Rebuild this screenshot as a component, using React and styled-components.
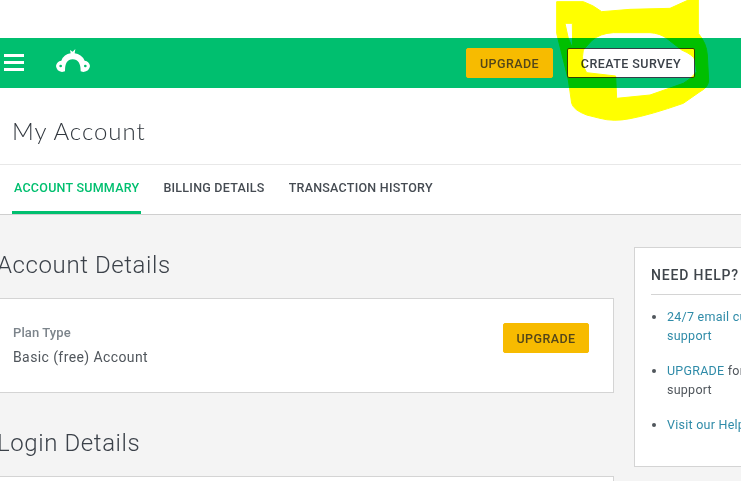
import React from "react";
import styled, { createGlobalStyle } from "styled-components";

const Global = createGlobalStyle`
  html, body { margin: 0; padding: 0; width: 741px; height: 481px; overflow: hidden; background: #fff; }
  body { font-family: "Roboto", "Liberation Sans", sans-serif; color: #3b4149; }
  * { box-sizing: border-box; }
`;

const Page = styled.div`
  position: relative;
  width: 741px;
  height: 481px;
  overflow: hidden;
  padding-top: 38px;
`;
const Header = styled.header`
  height: 50px;
  background: #00bf6f;
  display: flex;
  align-items: center;
  padding: 0 46px 0 4px;
`;
const Burger = styled.div`
  width: 20px;
  display: flex;
  flex-direction: column;
  gap: 4px;
  margin: -1px 16px 0 0;
  span { display: block; height: 3px; background: #fff; }
`;
const Actions = styled.div`
  margin-left: auto;
  display: flex;
  gap: 14px;
`;
const Button = styled.button`
  height: 30px;
  width: ${p => p.$w}px;
  padding: 2px 0 0;
  border-radius: 2px;
  border: 1px solid ${p => (p.$outline ? "#333e48" : "#f7bb00")};
  background: ${p => (p.$outline ? "#fff" : "#f7bb00")};
  color: ${p => (p.$outline ? "#3b4149" : "#53461a")};
  font: 500 12.5px/1 "Roboto", sans-serif;
  letter-spacing: 0.44px;
`;
const TitleBar = styled.div`
  height: 77px;
  padding: 25px 0 0 12px;
  border-bottom: 1px solid #e8e8e8;
`;
const Title = styled.h1`
  margin: 0;
  font: 300 24px/36px "Lato", sans-serif;
  letter-spacing: 0.95px;
  color: #32383f;
`;
const Tabs = styled.nav`
  height: 50px;
  display: flex;
  gap: 20px;
  padding-left: 12px;
  border-bottom: 1px solid #cfcfcf;
`;
const Tab = styled.a`
  height: 49px;
  padding: 15px 2px 0;
  font: 500 12.5px/16px "Roboto", sans-serif;
  letter-spacing: 0.25px;
  color: ${p => (p.$active ? "#00bf6f" : "#454b52")};
  border-bottom: 3px solid ${p => (p.$active ? "#00bf6f" : "transparent")};
`;
const Content = styled.main`
  height: 267px;
  background: #f4f4f4;
  display: flex;
  align-items: flex-start;
  gap: 20px;
  margin-right: -200px;
  margin-left: -12px;
`;
const Column = styled.div`
  width: 626px;
  flex: none;
`;
const SectionTitle = styled.h2`
  margin: 0;
  padding-left: 9px;
  font: 300 24px/30px "Roboto", sans-serif;
  letter-spacing: 0.6px;
  color: #3b4149;
  padding-top: ${p => p.$top}px;
  padding-bottom: ${p => p.$bottom}px;
`;
const Card = styled.section`
  background: #fff;
  border: 1px solid #d4d4d4;
  height: ${p => p.$h}px;
  display: flex;
  justify-content: space-between;
  padding: 24px 24px 0 24px;
`;
const PlanInfo = styled.div`
  padding-top: 1px;
`;
const Label = styled.div`
  font: 500 13px/18px "Roboto", sans-serif;
  letter-spacing: 0.1px;
  color: #7c848b;
  margin-bottom: 6px;
`;
const Value = styled.div`
  font: 400 14px/18px "Roboto", sans-serif;
  letter-spacing: 0.4px;
  color: #50565c;
`;
const Side = styled.aside`
  margin-top: 32px;
  width: 240px;
  height: 220px;
  flex: none;
  background: #fff;
  border: 1px solid #d4d4d4;
  padding: 18px 16px;
`;
const SideTitle = styled.h3`
  margin: 0;
  height: 29px;
  border-bottom: 1px solid #d4d4d4;
  font: 500 14px/18px "Roboto", sans-serif;
  letter-spacing: 0.85px;
  color: #3f454b;
`;
const HelpList = styled.ul`
  margin: 12px 0 0;
  padding: 0 0 0 16px;
  width: 160px;
  list-style: none;
`;
const HelpItem = styled.li`
  position: relative;
  font: 400 12.5px/19px "Roboto", sans-serif;
  letter-spacing: 0.25px;
  color: #50565c;
  margin-bottom: 16px;
  &::before {
    content: "";
    position: absolute;
    left: -15px;
    top: 8px;
    width: 4px;
    height: 4px;
    border-radius: 50%;
    background: #50565c;
  }
`;
const HelpLink = styled.a`
  color: #2f8ba8;
`;
const Scribble = styled.svg`
  position: absolute;
  left: 550px;
  top: 0;
  width: 170px;
  height: 125px;
  mix-blend-mode: multiply;
  pointer-events: none;
`;
const Logo = styled.svg`
  width: 60px;
  height: 40px;
  flex: none;
  margin-top: -6px;
`;

export default function App() {
  return (
    <Page>
      <Global />
      <Header>
        <Burger><span /><span /><span /></Burger>
        <Logo viewBox="0 0 180 120">
          <path
            fill="#fff"
            fillRule="evenodd"
            d="M48 78 Q50 64 64 62 Q72 42 92 40 L90 30 L98 35 L106 27 L104 40 Q124 42 134 62 Q148 64 150 78 Q148 94 130 96 L122 94 Q122 58 98 58 Q74 58 75 94 L66 96 Q50 94 48 78 Z
               M58 78 a4 4 0 1 0 8 0 a4 4 0 1 0 -8 0 Z
               M132 78 a4 4 0 1 0 8 0 a4 4 0 1 0 -8 0 Z"
          />
        </Logo>
        <Actions>
          <Button $w={87}>UPGRADE</Button>
          <Button $outline $w={128}>CREATE SURVEY</Button>
        </Actions>
      </Header>
      <TitleBar><Title>My Account</Title></TitleBar>
      <Tabs>
        <Tab $active>ACCOUNT SUMMARY</Tab>
        <Tab>BILLING DETAILS</Tab>
        <Tab>TRANSACTION HISTORY</Tab>
      </Tabs>
      <Content>
        <Column>
          <SectionTitle $top={35} $bottom={18}>Account Details</SectionTitle>
          <Card $h={95}>
            <PlanInfo>
              <Label>Plan Type</Label>
              <Value>Basic (free) Account</Value>
            </PlanInfo>
            <Button $w={86}>UPGRADE</Button>
          </Card>
          <SectionTitle $top={35} $bottom={18}>Login Details</SectionTitle>
          <Card $h={60} />
        </Column>
        <Side>
          <SideTitle>NEED HELP?</SideTitle>
          <HelpList>
            <HelpItem><HelpLink>24/7 email customer support</HelpLink></HelpItem>
            <HelpItem><HelpLink>UPGRADE</HelpLink> for phone support</HelpItem>
            <HelpItem><HelpLink>Visit our Help Center</HelpLink></HelpItem>
          </HelpList>
        </Side>
      </Content>
      <Scribble viewBox="0 0 510 375">
        <path
          fill="#ffff00"
          fillRule="evenodd"
          stroke="#ffff00"
          strokeWidth="3"
          strokeLinejoin="round"
          d="M20 5 L100 5 Q130 15 155 35 L240 28 L360 25 L415 0 L445 0 L445 100 Q470 130 472 165 L476 240 Q476 262 450 275 L400 310 Q300 345 240 356 Q190 366 150 355 L110 345 Q70 330 65 310 L55 240 L20 100 Z
             M125 122 Q150 100 190 98 L300 98 Q330 100 350 115 L395 150 Q430 165 435 180 L440 215 Q420 240 400 250 L300 285 L200 295 L197 228 L110 218 Q92 190 100 150 Z
             M45 70 L67 70 L68 145 L55 115 Z"
        />
      </Scribble>
    </Page>
  );
}
